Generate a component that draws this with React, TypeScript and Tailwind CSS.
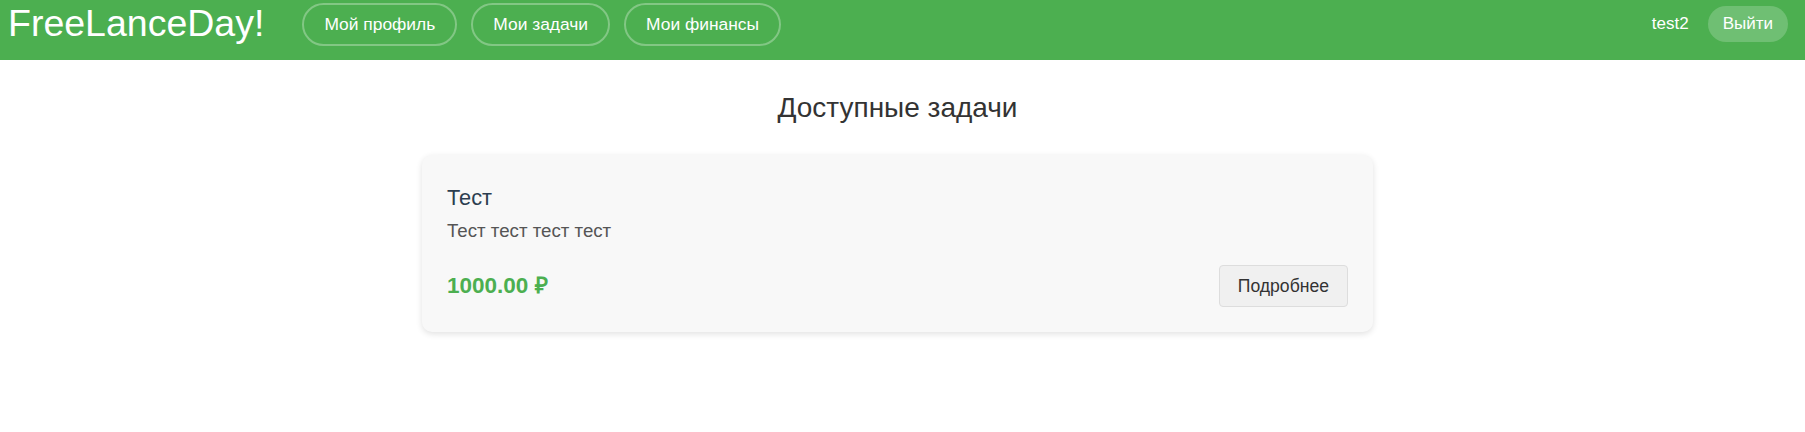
import React from "react";

const font = { fontFamily: '"Liberation Sans", Arial, sans-serif' };

export default function App() {
  return (
    <div className="min-h-[432px] bg-white" style={font}>
      <header className="flex h-[60px] items-center justify-between bg-[#4CAF50] pb-[12px] pl-[8px] pr-[17px]">
        <div className="flex items-center">
          <span className="text-[37.5px] leading-none text-white">FreeLanceDay!</span>
          <nav className="ml-[38px] flex items-center gap-[14px]">
            {["Мой профиль", "Мои задачи", "Мои финансы"].map((t) => (
              <button
                key={t}
                className="flex h-[43px] items-center rounded-full border-2 border-white/30 px-[20px] text-[17.4px] text-white"
              >
                {t}
              </button>
            ))}
          </nav>
        </div>
        <div className="flex items-center">
          <span className="text-[17px] text-white">test2</span>
          <button className="ml-[19px] flex h-[36px] items-center rounded-full bg-white/20 px-[15px] text-[17px] text-white">
            Выйти
          </button>
        </div>
      </header>
      <main className="flex flex-col items-center pr-[10px] pt-[32px]">
        <h1 className="text-[28px] leading-[32px] text-[#333]">Доступные задачи</h1>
        <div className="mt-[31px] w-[951px] rounded-[10px] bg-[#f8f8f8] px-[25px] pb-[25px] pt-[31px] shadow-[0_2px_6px_rgba(0,0,0,0.12)]">
          <h3 className="text-[21.8px] leading-[24px] text-[#2c3e50]">Тест</h3>
          <p className="mt-[10px] text-[18.7px] leading-[21px] text-[#555]">Тест тест тест тест</p>
          <div className="mt-[24px] flex items-center justify-between">
            <span className="text-[22.5px] font-bold text-[#4CAF50]">1000.00 ₽</span>
            <button className="flex h-[42px] items-center rounded-[4px] border border-[#ddd] bg-[#f0f0f0] px-[18px] text-[17.6px] text-[#333]">
              Подробнее
            </button>
          </div>
        </div>
      </main>
    </div>
  );
}
